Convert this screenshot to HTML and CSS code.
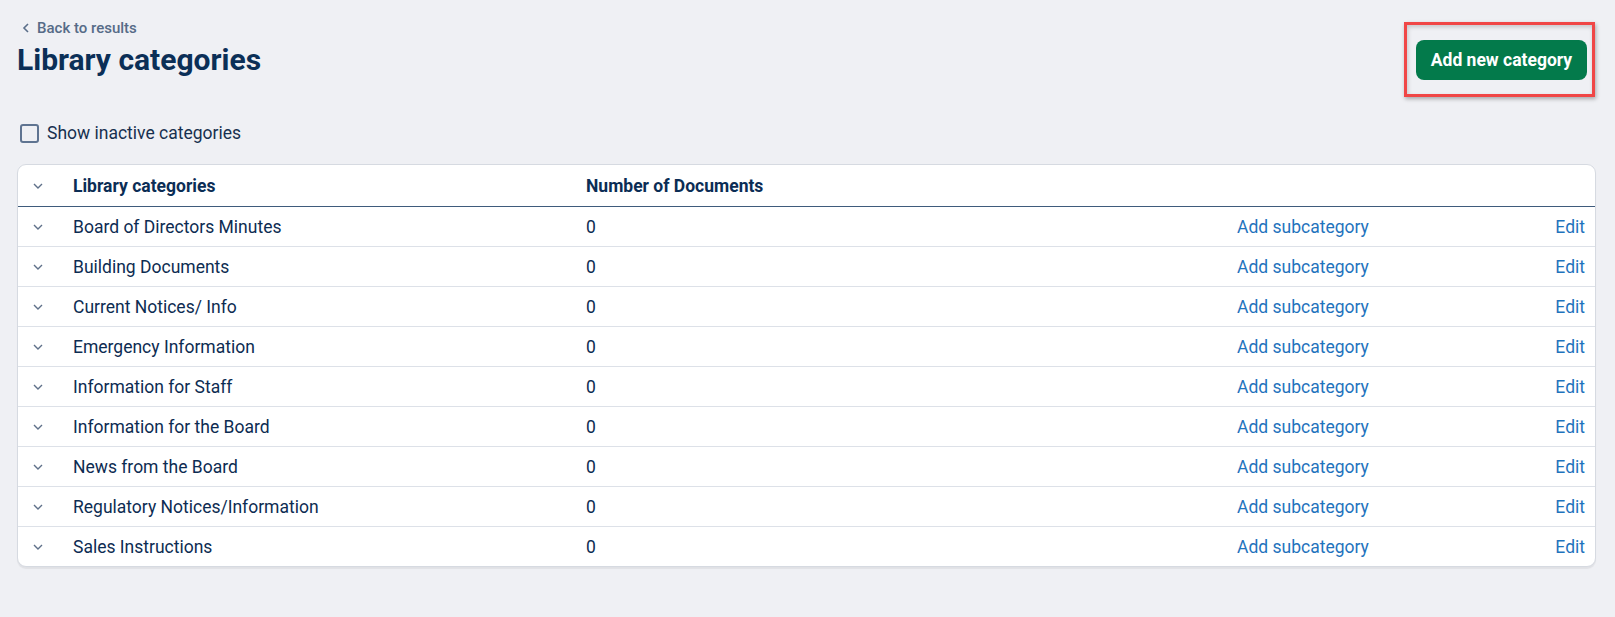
FILE: index.html
```html
<!DOCTYPE html>
<html>
<head>
    <title>Library categories</title>
    <link rel="stylesheet" href="styles.css">
</head>
<body>
    <div class="page">
        <div class="top-bar">
            <div>
                <a href="#" class="back-link">
                    <svg width="8" height="10" viewBox="0 0 8 10"><path d="M6 1 L2 5 L6 9" fill="none" stroke="#5a6e89" stroke-width="1.6"/></svg>
                    Back to results
                </a>
                <h1>Library categories</h1>
            </div>
            <div class="btn-wrap">
                <button class="btn-primary">Add new category</button>
                <span class="highlight"></span>
            </div>
        </div>

        <label class="check-row">
            <span class="checkbox"></span>
            Show inactive categories
        </label>

        <div class="card">
            <div class="row head">
                <span class="chev"><svg width="10" height="6" viewBox="0 0 10 6"><path d="M1 1 L5 5 L9 1" fill="none" stroke="#5f7089" stroke-width="1.4"/></svg></span>
                <span>Library categories</span>
                <span>Number of Documents</span>
                <span></span>
                <span></span>
            </div>
            <div id="rows"></div>
        </div>
    </div>

    <script>
        // category list
        const categories = [
            "Board of Directors Minutes",
            "Building Documents",
            "Current Notices/ Info",
            "Emergency Information",
            "Information for Staff",
            "Information for the Board",
            "News from the Board",
            "Regulatory Notices/Information",
            "Sales Instructions"
        ];
        const chev = '<svg width="10" height="6" viewBox="0 0 10 6"><path d="M1 1 L5 5 L9 1" fill="none" stroke="#5f7089" stroke-width="1.4"/></svg>';
        let html = "";
        categories.forEach(function(name) {
            html += `<div class="row">
                <span class="chev">${chev}</span>
                <span>${name}</span>
                <span>0</span>
                <a href="#" class="link">Add subcategory</a>
                <a href="#" class="link edit">Edit</a>
            </div>`;
        });
        document.getElementById("rows").innerHTML = html;
    </script>
</body>
</html>
```

FILE: styles.css
```css
body {
    margin: 0;
    background-color: #eff0f4;
    font-family: Roboto, "Liberation Sans", sans-serif;
    color: #0c2d53;
}
.page {
    padding: 19px 19px 40px 17px;
}
.top-bar {
    display: flex;
    justify-content: space-between;
    align-items: flex-start;
}
.back-link {
    display: flex;
    align-items: center;
    gap: 7px;
    padding-left: 5px;
    font-size: 15px;
    font-weight: 500;
    color: #566b87;
    text-decoration: none;
    line-height: 18px;
}
h1 {
    margin: 5px 0 0 0;
    font-size: 30px;
    font-weight: 700;
    color: #0b2f57;
    line-height: 36px;
}
.btn-wrap {
    position: relative;
    margin-top: 21px;
    margin-right: 9px;
}
.btn-primary {
    background-color: #037a4b;
    color: #fff;
    border: none;
    border-radius: 8px;
    height: 40px;
    width: 171px;
    font-family: Roboto, "Liberation Sans", sans-serif;
    font-size: 17.5px;
    font-weight: 700;
    cursor: pointer;
}
.highlight {
    position: absolute;
    top: -18px;
    left: -12px;
    width: 191px;
    height: 75px;
    box-sizing: border-box;
    border: 3px solid #f04646;
    box-shadow: 1px 2px 4px rgba(0, 0, 0, 0.3), inset 1px 2px 4px rgba(0, 0, 0, 0.18);
    pointer-events: none;
}
.check-row {
    display: flex;
    align-items: center;
    gap: 8px;
    margin-top: 43px;
    padding-left: 3px;
    font-size: 17.5px;
    color: #17304f;
}
.checkbox {
    width: 15px;
    height: 15px;
    border: 2px solid #5f7491;
    border-radius: 3px;
    background: #eff0f4;
}
.card {
    margin-top: 21px;
    background-color: #fff;
    border: 1px solid #d6dae1;
    border-radius: 9px;
    box-shadow: 0 2px 1px rgba(0, 0, 0, 0.06);
    overflow: hidden;
}
.row {
    display: grid;
    grid-template-columns: 55px 513px 651px 1fr auto;
    align-items: center;
    height: 39px;
    border-bottom: 1px solid #dde1e8;
    font-size: 17.5px;
    color: #0d2c52;
}
.row:last-child {
    border-bottom: none;
}
.row.head {
    height: 41px;
    border-bottom: 1px solid #3f5b7c;
    font-weight: 700;
    color: #0b2d55;
}
.chev {
    display: flex;
    padding-left: 15px;
}
.link {
    color: #1f73bd;
    text-decoration: none;
}
.edit {
    padding-right: 10px;
}
```
